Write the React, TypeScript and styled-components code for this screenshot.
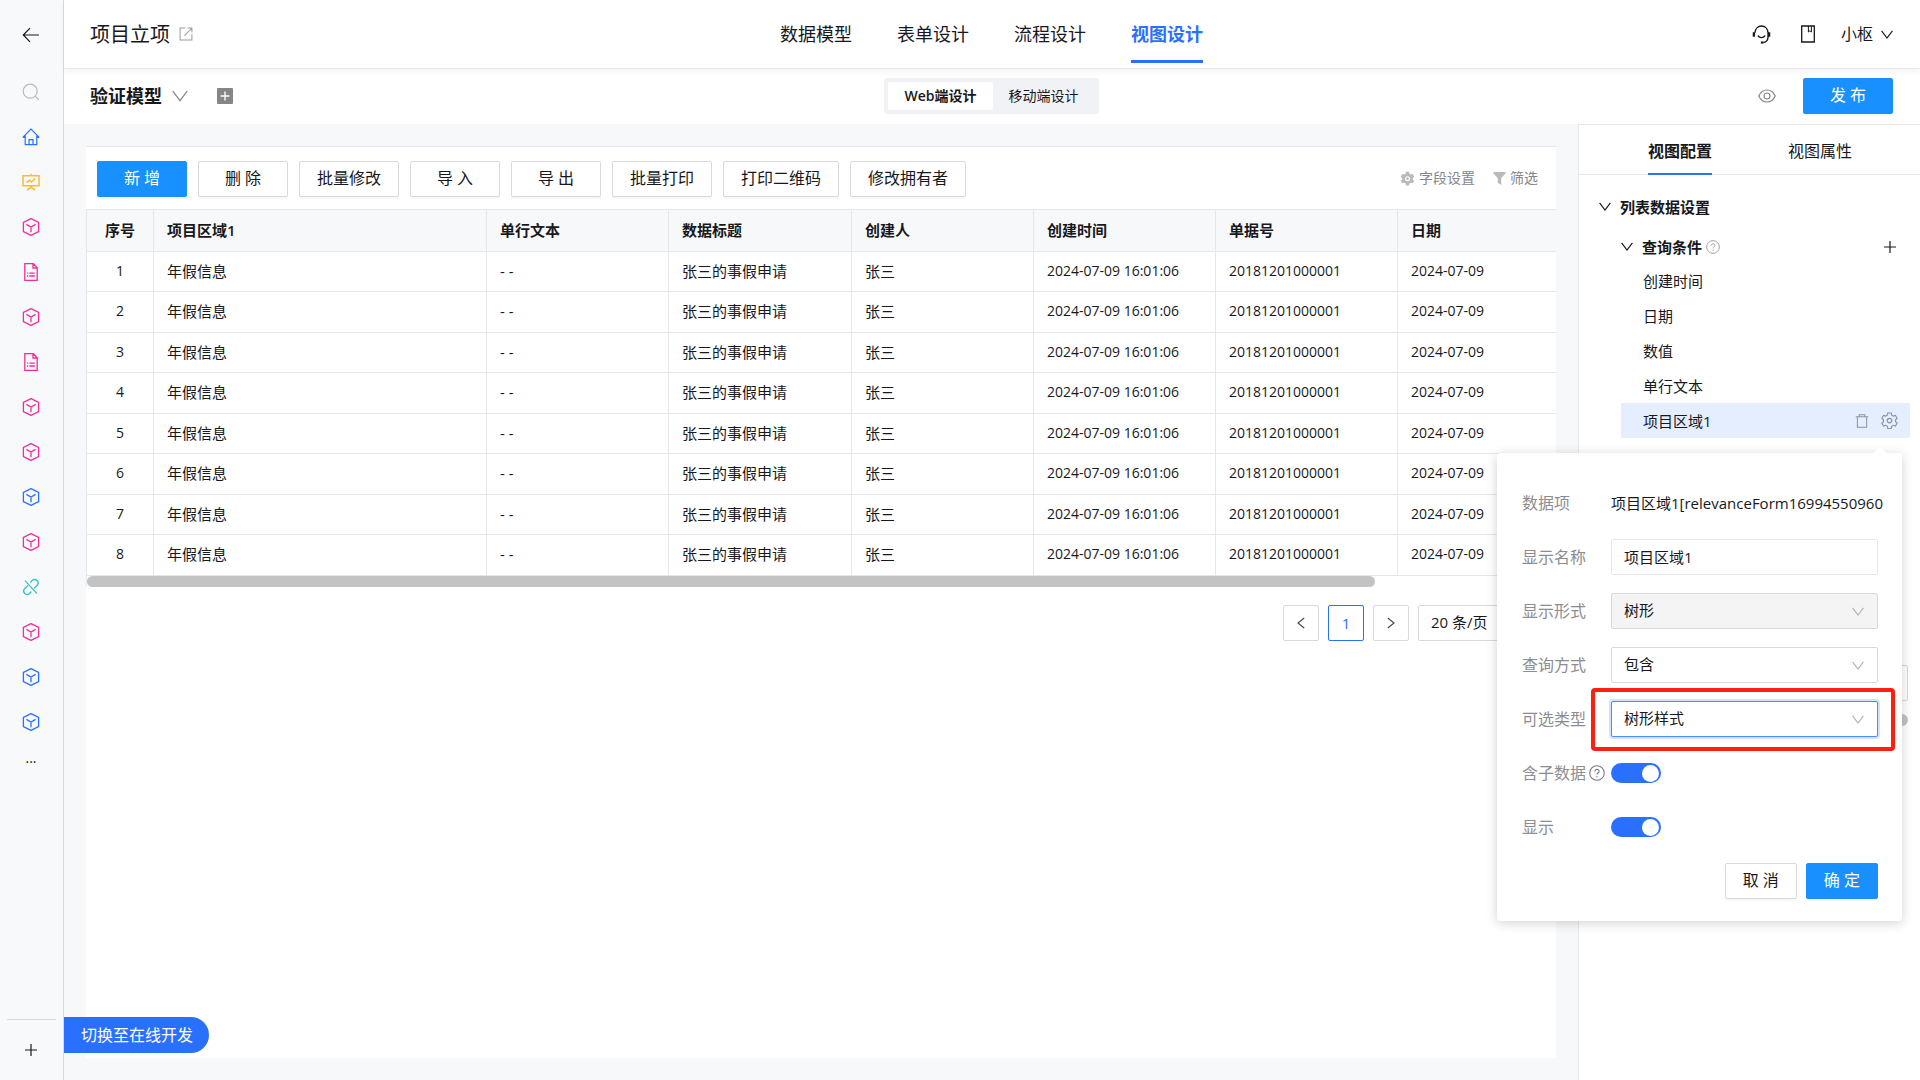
import React from "react";
import styled, { createGlobalStyle, css } from "styled-components";

const blue = "#2970ff";
const primary = "#1890ff";
const ink = "#17181c";
const line = "#e6e7ea";
const control = "#d9d9d9";
const canvas = "#f6f8fa";

const GlobalStyle = createGlobalStyle`
  *, *::before, *::after { box-sizing: border-box; }
  body {
    margin: 0;
    background: ${canvas};
    color: ${ink};
    font: 15px/24px "Open Sans", "Noto Sans CJK SC", sans-serif;
  }
  button, input, select { font: inherit; color: inherit; margin: 0; }
  button { padding: 0; border: 0; background: none; cursor: pointer; }
  a { color: inherit; text-decoration: none; }
  svg { display: block; flex: none; }
`;

/* ---------- icons ---------- */

type IconProps = { size?: number; color?: string };

const Svg = ({
  size = 16,
  color = "currentColor",
  weight = 1.2,
  children,
}: IconProps & { weight?: number; children: React.ReactNode }) => (
  <svg
    width={size}
    height={size}
    viewBox="0 0 18 18"
    fill="none"
    stroke={color}
    strokeWidth={weight}
    aria-hidden="true"
  >
    {children}
  </svg>
);

const BackIcon = () => (
  <Svg size={18}>
    <path d="M17 9H1.5M8 2.2 1.3 9 8 15.8" />
  </Svg>
);
const SearchIcon = () => (
  <Svg size={18} color="#b9bbbf">
    <circle cx="8.2" cy="8.2" r="7" />
    <path d="m13.2 13.2 3.6 3.6" />
  </Svg>
);
const HomeIcon = () => (
  <Svg size={18} color={blue}>
    <path d="M.8 9.4 9 1.2l8.2 8.2M3.2 7.6v9h11.6v-9M.8 9.4h2.4M14.8 9.4h2.4M7 16.6v-5h4v5" />
  </Svg>
);
const BoardIcon = () => (
  <Svg size={18} color="#ffb938" weight={1.5}>
    <path d="M1 2.8h16v10H1zM9 .8v2M4.600 9.600l2.800-2.400 2 1.800 3.800-3.400M9 12.800v2M5 17l4-2.600 4 2.600" />
  </Svg>
);
const CubeIcon = ({ color }: IconProps) => (
  <Svg size={18} color={color} weight={1.3}>
    <path d="M9 .6 16.600 4.500v9L9 17.400 1.400 13.500v-9zM4.400 6.400 9 9l4.600-2.600M9 9v5.200" />
  </Svg>
);
const DocIcon = ({ color }: IconProps) => (
  <Svg size={18} color={color} weight={1.3}>
    <path d="M2.800.7h8.600l3.800 4v12.600H2.800zM11 1v4h4M5 10.200h1.200M7.400 10.200h5.400M5 13h1.200M7.400 13h5.400" />
  </Svg>
);
const LinkIcon = () => (
  <Svg size={18} color="#3fc1c4" weight={1.4}>
    <path d="m8.400 4.400 1.800-1.800a3.400 3.400 0 0 1 4.800 0 3.400 3.400 0 0 1 0 4.800L12 10.400M9.400 13.600l-1.800 1.800a3.400 3.400 0 0 1-4.800 0 3.400 3.400 0 0 1 0-4.800L6 7.600M3 2.600l12 13" />
  </Svg>
);
const PlusIcon = ({ size = 12 }: IconProps) => (
  <Svg size={size} weight={1.8}>
    <path d="M9 0v18M0 9h18" />
  </Svg>
);
const ExternalIcon = () => (
  <Svg size={14} color="#9b9ca0" weight={1.3}>
    <path d="M8 1.400H1.400v15.200h15.200V9M11 1.400h5.600V7M16.400 1.600 7 11" />
  </Svg>
);
const Chevron = ({
  width = 12,
  color = "currentColor",
}: {
  width?: number;
  color?: string;
}) => (
  <svg
    width={width}
    height={(width * 3) / 4}
    viewBox="0 0 12 9"
    fill="none"
    stroke={color}
    strokeWidth={14 / width}
    aria-hidden="true"
  >
    <path d="M.6.800 6 8 11.400.8" />
  </svg>
);
const AddSquareIcon = () => (
  <svg width="16" height="16" viewBox="0 0 16 16" aria-hidden="true">
    <rect width="16" height="16" rx="1" fill="#85868a" />
    <path d="M8 3.500v9M3.500 8h9" stroke="#fff" strokeWidth="1.400" />
  </svg>
);
const HeadsetIcon = () => (
  <Svg size={19} weight={1.3}>
    <path d="M2.800 7.400C3 3.600 5.600 1 9 1s6 2.600 6.200 6.400v4.200c-.2 3-1.800 4.600-4.400 5M5.800 9.800c.8 2.800 5.600 2.800 6.400 0" />
    <path d="M1.800 6.800v4.400M16.200 6.800v4.400" strokeWidth="2.200" />
    <path d="M8.400 16.600h2.400" strokeWidth="2" />
  </Svg>
);
const BookIcon = () => (
  <svg width="14" height="18" viewBox="0 0 14 18" fill="none" stroke="currentColor" strokeWidth="1.300" aria-hidden="true">
    <path d="M.7 1h12.600v16H.7z" />
    <path d="M7.400 1v6l1.500-1.300L10.400 7V1" strokeWidth="1" />
  </svg>
);
const EyeIcon = () => (
  <Svg size={18} color="#85868a">
    <path d="M.8 9C2.600 5 5.400 3 9 3s6.400 2 8.200 6c-1.800 4-4.600 6-8.200 6S2.600 13 .8 9z" />
    <circle cx="9" cy="9" r="3" />
  </Svg>
);
const gearPath =
  "M7.200 1h3.600l.5 2.300 1.700 1 2.300-.7 1.800 3.100-1.700 1.600v1.900l1.700 1.500-1.800 3.100-2.300-.7-1.700 1-.5 2.400H7.200l-.5-2.400-1.700-1-2.300.7-1.800-3.100 1.700-1.500V8.300L.9 6.700l1.800-3.100 2.300.7 1.700-1z";
const GearIcon = () => (
  <Svg size={17} color="#8b93a3">
    <path d={gearPath} />
    <circle cx="9" cy="9.100" r="2.400" />
  </Svg>
);
const GearSolidIcon = () => (
  <svg width="15" height="15" viewBox="0 0 18 18" aria-hidden="true">
    <path d={gearPath} fill="#b9babd" />
    <circle cx="9" cy="9.200" r="3" fill="#fff" />
    <circle cx="9" cy="9.200" r="1.600" fill="#b9babd" />
  </svg>
);
const FilterIcon = () => (
  <svg width="13" height="13" viewBox="0 0 13 13" aria-hidden="true">
    <path d="M.5 0h12v1.500L8.200 6v7L4.800 10.800V6L.5 1.500z" fill="#b9babd" />
  </svg>
);
const TrashIcon = () => (
  <Svg size={14} color="#8b93a3" weight={1.3}>
    <path d="M1 3.600h16M5.400 3.400V1h7.200v2.400M3 3.600V17h12V3.600" />
  </Svg>
);
const HelpIcon = ({ size = 14, color = "#9b9ca0" }: IconProps) => (
  <Svg size={size} color={color}>
    <circle cx="9" cy="9" r="8.200" />
    <path d="M6.600 7.200c0-3 4.800-3 4.800 0 0 1.600-2.400 1.600-2.400 3.600M9 12.400v1.400" />
  </Svg>
);
const PageArrow = ({ next }: { next?: boolean }) => (
  <svg width="8" height="12" viewBox="0 0 8 12" fill="none" stroke="#4b4c50" strokeWidth="1.200" aria-hidden="true">
    <path d={next ? "M.8 1 7 6 .8 11" : "M7.200 1 1 6l6.200 5"} />
  </svg>
);

/* ---------- shell ---------- */

const Shell = styled.div`
  display: flex;
  min-height: 100vh;
`;

const Sidebar = styled.nav`
  flex: none;
  width: 64px;
  display: flex;
  flex-direction: column;
  align-items: center;
  padding: 12px 1px 0 0;
  border-right: 1px solid ${control};
  background: #f7f9fb;
`;

const RailButton = styled.button<{ $gap?: number }>`
  display: grid;
  place-items: center;
  width: 45px;
  height: 45px;
  margin-top: ${(p) => p.$gap ?? 0}px;
`;

const More = styled.button`
  height: 24px;
  margin-top: 2px;
  font-size: 14px;
`;

const RailFooter = styled.div`
  margin-top: auto;
  width: 49px;
  height: 61px;
  display: grid;
  place-items: center;
  border-top: 1px solid ${control};
`;

const Page = styled.div`
  flex: 1;
  min-width: 0;
  display: flex;
  flex-direction: column;
`;

const barGrid = css`
  display: grid;
  grid-template-columns: 1fr auto 1fr;
  align-items: center;
  background: #fff;
`;

const Header = styled.header`
  ${barGrid}
  position: relative;
  height: 69px;
  padding: 0 27px 0 26px;
  border-bottom: 1px solid ${line};
  box-shadow: 0 3px 6px rgba(0, 0, 0, 0.04);
`;

const SubHeader = styled.div`
  ${barGrid}
  height: 55px;
  padding: 0 27px 2px 26px;
`;

const Side = styled.div<{ $end?: boolean; $gap: number }>`
  display: flex;
  align-items: center;
  justify-content: ${(p) => (p.$end ? "flex-end" : "flex-start")};
  gap: ${(p) => p.$gap}px;
`;

const Title = styled.h1`
  margin: 0;
  padding-top: 2px;
  font-size: 20px;
  font-weight: 400;
`;

const MainTabs = styled.nav`
  display: flex;
  gap: 45px;
  align-self: start;
`;

const MainTab = styled.a<{ $active?: boolean }>`
  padding: 22px 0 14px;
  border-bottom: 3px solid ${(p) => (p.$active ? blue : "transparent")};
  color: ${(p) => (p.$active ? blue : ink)};
  font-size: 18px;
  font-weight: ${(p) => (p.$active ? 700 : 400)};
`;

const UserButton = styled.button`
  display: flex;
  align-items: center;
  gap: 8px;
  font-size: 16px;
`;

const ModelName = styled.button`
  display: flex;
  align-items: center;
  gap: 10px;
  margin-right: 29px;
  font-size: 18px;
  font-weight: 700;
`;

const Segmented = styled.div`
  display: flex;
  height: 36px;
  padding: 4px;
  border-radius: 3px;
  background: #f0f2f6;
`;

const Segment = styled.button<{ $active?: boolean }>`
  padding: 0 16px;
  border-radius: 2px;
  background: ${(p) => (p.$active ? "#fff" : "transparent")};
  font-size: 14px;
  font-weight: ${(p) => (p.$active ? 600 : 400)};
`;

const Button = styled.button<{ $primary?: boolean; $min?: number }>`
  height: 36px;
  min-width: ${(p) => p.$min ?? 0}px;
  padding: 0 17px 2px;
  border: 1px solid ${(p) => (p.$primary ? primary : control)};
  border-radius: 2px;
  background: ${(p) => (p.$primary ? primary : "#fff")};
  color: ${(p) => (p.$primary ? "#fff" : ink)};
  box-shadow: 0 2px 1px rgba(0, 0, 0, 0.03);
  font-size: 16px;
  white-space: nowrap;
`;

const Body = styled.div`
  flex: 1;
  display: flex;
  min-height: 0;
`;

/* ---------- list preview ---------- */

const Main = styled.main`
  flex: 1;
  min-width: 0;
  display: flex;
  padding: 22px;
`;

const Card = styled.section`
  flex: 1;
  min-width: 0;
  border-top: 1px solid ${line};
  background: #fff;
`;

const Toolbar = styled.div`
  display: flex;
  align-items: center;
  gap: 11px;
  padding: 14px 18px 12px 11px;
`;

const ToolLinks = styled.div`
  display: flex;
  gap: 18px;
  margin-left: auto;
  padding-bottom: 2px;
`;

const ToolLink = styled.button`
  display: flex;
  align-items: center;
  gap: 4px;
  color: #85868a;
  font-size: 14px;
`;

const TableScroll = styled.div`
  overflow: hidden;
  border-left: 1px solid ${line};
`;

const Table = styled.table`
  width: 1676px;
  table-layout: fixed;
  border-collapse: separate;
  border-spacing: 0;
  border-top: 1px solid ${line};
  tbody tr:nth-child(odd) { height: 40px; }
  tbody tr:nth-child(even) { height: 41px; }
`;

const cell = css`
  padding: 0 13px 2px;
  border-right: 1px solid ${line};
  border-bottom: 1px solid ${line};
  text-align: left;
  white-space: nowrap;
  &:first-child { text-align: center; }
`;

const Th = styled.th`
  ${cell}
  height: 42px;
  background: #f7f8fa;
  font-weight: 600;
`;

const Td = styled.td<{ $numeric?: boolean }>`
  ${cell}
  font-size: ${(p) => (p.$numeric ? 14 : 15)}px;
`;

const ScrollThumb = styled.div`
  width: 87.7%;
  height: 11px;
  border-radius: 6px;
  background: #c2c3c5;
`;

const Pagination = styled.div`
  display: flex;
  justify-content: flex-end;
  gap: 9px;
  padding: 18px 18px 0 0;
`;

const PageButton = styled.button<{ $active?: boolean }>`
  display: grid;
  place-items: center;
  width: 36px;
  height: 36px;
  border: 1px solid ${(p) => (p.$active ? blue : control)};
  border-radius: 2px;
  color: ${(p) => (p.$active ? blue : ink)};
`;

/* ---------- form controls ---------- */

const Control = styled.div<{ $width?: number }>`
  display: grid;
  align-items: center;
  position: relative;
  width: ${(p) => (p.$width ? `${p.$width}px` : "auto")};
  > * { grid-area: 1 / 1; }
  > svg { justify-self: end; margin-right: 14px; pointer-events: none; }
`;

const field = css`
  width: 100%;
  height: 36px;
  padding: 0 12px 2px;
  border: 1px solid ${control};
  border-radius: 2px;
  background: #fff;
  font-size: 15px;
  opacity: 1;
  outline: 0;
`;

const TextInput = styled.input`
  ${field}
  border-color: ${line};
`;

const NativeSelect = styled.select<{ $focused?: boolean }>`
  ${field}
  appearance: none;
  &:disabled { background: #f4f4f4; color: ${ink}; }
  ${(p) =>
    p.$focused &&
    css`
      border-color: #4c8bff;
      box-shadow: 0 0 0 2px rgba(41, 112, 255, 0.2);
    `}
`;

const Highlight = styled.div`
  position: absolute;
  inset: -13px -17px -14px -20px;
  border: 4px solid #ff1f10;
  border-radius: 4px;
  pointer-events: none;
`;

const Switch = styled.input`
  appearance: none;
  display: flex;
  align-items: center;
  justify-content: flex-end;
  width: 50px;
  height: 20px;
  padding: 0 2px;
  border-radius: 10px;
  background: ${blue};
  cursor: pointer;
  &::before {
    content: "";
    width: 17px;
    height: 17px;
    border-radius: 50%;
    background: #fff;
  }
`;

/* ---------- config panel ---------- */

const Panel = styled.aside`
  flex: none;
  width: 342px;
  border: solid ${line};
  border-width: 1px 0 0 1px;
  background: #fff;
`;

const PanelTabs = styled.div`
  display: flex;
  gap: 76px;
  padding-left: 69px;
  height: 50px;
  border-bottom: 1px solid ${line};
`;

const PanelTab = styled.button<{ $active?: boolean }>`
  height: 50px;
  padding-top: 4px;
  border-bottom: 2px solid ${(p) => (p.$active ? blue : "transparent")};
  font-size: 16px;
  font-weight: ${(p) => (p.$active ? 600 : 400)};
`;

const Tree = styled.div`
  padding: 13px 10px 0 20px;
`;

const Group = styled.div<{ $nested?: boolean }>`
  display: flex;
  align-items: center;
  height: ${(p) => (p.$nested ? 33 : 37)}px;
  padding: ${(p) => (p.$nested ? "0 14px 0 22px" : "0")};
  margin-bottom: ${(p) => (p.$nested ? 0 : 5)}px;
`;

const GroupToggle = styled.button`
  display: flex;
  align-items: center;
  gap: 9px;
  font-size: 15px;
  font-weight: 600;
`;

const GroupHelp = styled.span`
  margin: 0 auto 0 4px;
`;

const Conditions = styled.ul`
  margin: 0 0 0 22px;
  padding: 0;
  list-style: none;
`;

const Condition = styled.li<{ $selected?: boolean }>`
  position: relative;
  display: flex;
  align-items: center;
  gap: 12px;
  height: 35px;
  padding: 0 12px 0 22px;
  background: ${(p) => (p.$selected ? "#e5eeff" : "transparent")};
`;

const ConditionName = styled.span`
  flex: 1;
`;

const Extras = styled.div`
  display: grid;
  justify-items: end;
  gap: 13px;
  padding: 227px 12px 0 0;
`;

const ExtraInput = styled.input`
  ${field}
  width: 290px;
`;

const ExtraTrack = styled.div`
  width: 290px;
  height: 12px;
  border-radius: 6px;
  background: #c2c3c5;
`;

const Popover = styled.form`
  position: absolute;
  z-index: 2;
  top: 50px;
  right: 8px;
  display: grid;
  grid-template-columns: 89px 267px;
  grid-auto-rows: 36px;
  align-items: center;
  row-gap: 18px;
  padding: 32px 24px 22px 25px;
  border-radius: 4px;
  background: #fff;
  box-shadow: 0 2px 12px rgba(0, 0, 0, 0.18);
  &::before {
    content: "";
    position: absolute;
    top: -6px;
    right: 15px;
    width: 14px;
    height: 6px;
    background: #fff;
    clip-path: polygon(50% 0, 100% 100%, 0 100%);
  }
`;

const Label = styled.label`
  display: flex;
  align-items: center;
  gap: 3px;
  color: #8c8d91;
  font-size: 16px;
  white-space: nowrap;
`;

const ItemValue = styled.output`
  font-size: 15px;
  white-space: nowrap;
`;

const Actions = styled.div`
  grid-column: 1 / -1;
  display: flex;
  justify-content: flex-end;
  gap: 9px;
`;

const ModeSwitch = styled.button`
  position: fixed;
  left: 64px;
  bottom: 27px;
  height: 36px;
  padding: 0 16px 0 17px;
  border-radius: 0 18px 18px 0;
  background: ${blue};
  color: #fff;
  font-size: 16px;
`;

/* ---------- data ---------- */

const pink = "#f22e96";

const rail: { name: string; icon: React.ReactNode }[] = [
  { name: "首页", icon: <HomeIcon /> },
  { name: "看板", icon: <BoardIcon /> },
  { name: "模型一", icon: <CubeIcon color={pink} /> },
  { name: "文档一", icon: <DocIcon color={pink} /> },
  { name: "模型二", icon: <CubeIcon color={pink} /> },
  { name: "文档二", icon: <DocIcon color={pink} /> },
  { name: "模型三", icon: <CubeIcon color={pink} /> },
  { name: "模型四", icon: <CubeIcon color={pink} /> },
  { name: "模型五", icon: <CubeIcon color={blue} /> },
  { name: "模型六", icon: <CubeIcon color={pink} /> },
  { name: "链接", icon: <LinkIcon /> },
  { name: "模型七", icon: <CubeIcon color={pink} /> },
  { name: "模型八", icon: <CubeIcon color={blue} /> },
  { name: "模型九", icon: <CubeIcon color={blue} /> },
];

const mainTabs = ["数据模型", "表单设计", "流程设计", "视图设计"];
const tools = ["新 增", "删 除", "批量修改", "导 入", "导 出", "批量打印", "打印二维码", "修改拥有者"];

const columns = [
  { title: "序号", width: 67 },
  { title: "项目区域1", width: 333 },
  { title: "单行文本", width: 182 },
  { title: "数据标题", width: 183 },
  { title: "创建人", width: 182 },
  { title: "创建时间", width: 182 },
  { title: "单据号", width: 182 },
  { title: "日期" },
];

const record = ["年假信息", "- -", "张三的事假申请", "张三", "2024-07-09 16:01:06", "20181201000001", "2024-07-09"];
const rows = Array.from({ length: 8 }, (_, i) => [String(i + 1), ...record]);
const conditions = ["创建时间", "日期", "数值", "单行文本", "项目区域1"];

/* ---------- parts ---------- */

type SelectProps = {
  id?: string;
  label?: string;
  value: string;
  width?: number;
  disabled?: boolean;
  focused?: boolean;
};

const Select = ({ id, label, value, width, disabled, focused }: SelectProps) => (
  <Control $width={width}>
    <NativeSelect id={id} aria-label={label} disabled={disabled} $focused={focused}>
      <option>{value}</option>
    </NativeSelect>
    <Chevron width={12} color="#b4b4b4" />
    {focused && <Highlight />}
  </Control>
);

const ConditionPopover = () => (
  <Popover onSubmit={(e) => e.preventDefault()}>
    <Label htmlFor="item">数据项</Label>
    <ItemValue id="item">项目区域1[relevanceForm16994550960</ItemValue>
    <Label htmlFor="name">显示名称</Label>
    <TextInput id="name" defaultValue="项目区域1" />
    <Label htmlFor="form">显示形式</Label>
    <Select id="form" value="树形" disabled />
    <Label htmlFor="query">查询方式</Label>
    <Select id="query" value="包含" />
    <Label htmlFor="kind">可选类型</Label>
    <Select id="kind" value="树形样式" focused />
    <Label htmlFor="children">
      含子数据
      <HelpIcon size={16} color="#77787c" />
    </Label>
    <Switch id="children" type="checkbox" defaultChecked />
    <Label htmlFor="visible">显示</Label>
    <Switch id="visible" type="checkbox" defaultChecked />
    <Actions>
      <Button type="button" $min={72}>取 消</Button>
      <Button type="submit" $primary $min={72}>确 定</Button>
    </Actions>
  </Popover>
);

export default function App() {
  return (
    <Shell>
      <GlobalStyle />
      <Sidebar>
        <RailButton aria-label="返回"><BackIcon /></RailButton>
        <RailButton aria-label="搜索" $gap={12}><SearchIcon /></RailButton>
        {rail.map((item) => (
          <RailButton key={item.name} aria-label={item.name}>{item.icon}</RailButton>
        ))}
        <More>...</More>
        <RailFooter>
          <RailButton aria-label="添加"><PlusIcon /></RailButton>
        </RailFooter>
      </Sidebar>

      <Page>
        <Header>
          <Side $gap={9}>
            <Title>项目立项</Title>
            <ExternalIcon />
          </Side>
          <MainTabs>
            {mainTabs.map((tab) => (
              <MainTab key={tab} href="#" $active={tab === "视图设计"}>{tab}</MainTab>
            ))}
          </MainTabs>
          <Side $end $gap={26}>
            <Side $gap={30}>
              <button aria-label="客服"><HeadsetIcon /></button>
              <button aria-label="手册"><BookIcon /></button>
            </Side>
            <UserButton>小枢<Chevron width={12} /></UserButton>
          </Side>
        </Header>

        <SubHeader>
          <Side $gap={0}>
            <ModelName>验证模型<Chevron width={16} color="#85868a" /></ModelName>
            <button aria-label="新建模型"><AddSquareIcon /></button>
          </Side>
          <Segmented>
            <Segment $active>Web端设计</Segment>
            <Segment>移动端设计</Segment>
          </Segmented>
          <Side $end $gap={27}>
            <button aria-label="预览"><EyeIcon /></button>
            <Button $primary $min={90}>发 布</Button>
          </Side>
        </SubHeader>

        <Body>
          <Main>
            <Card>
              <Toolbar>
                {tools.map((tool, i) => (
                  <Button key={tool} $primary={i === 0} $min={90}>{tool}</Button>
                ))}
                <ToolLinks>
                  <ToolLink><GearSolidIcon />字段设置</ToolLink>
                  <ToolLink><FilterIcon />筛选</ToolLink>
                </ToolLinks>
              </Toolbar>
              <TableScroll>
                <Table>
                  <colgroup>
                    {columns.map((c) => <col key={c.title} width={c.width} />)}
                  </colgroup>
                  <thead>
                    <tr>{columns.map((c) => <Th key={c.title}>{c.title}</Th>)}</tr>
                  </thead>
                  <tbody>
                    {rows.map((row) => (
                      <tr key={row[0]}>
                        {row.map((value, i) => (
                          <Td key={i} $numeric={i === 0 || i > 4}>{value}</Td>
                        ))}
                      </tr>
                    ))}
                  </tbody>
                </Table>
                <ScrollThumb />
              </TableScroll>
              <Pagination>
                <PageButton aria-label="上一页"><PageArrow /></PageButton>
                <PageButton $active>1</PageButton>
                <PageButton aria-label="下一页"><PageArrow next /></PageButton>
                <Select label="每页条数" value="20 条/页" width={120} />
              </Pagination>
            </Card>
          </Main>

          <Panel>
            <PanelTabs>
              <PanelTab $active>视图配置</PanelTab>
              <PanelTab>视图属性</PanelTab>
            </PanelTabs>
            <Tree>
              <Group>
                <GroupToggle><Chevron width={12} />列表数据设置</GroupToggle>
              </Group>
              <Group $nested>
                <GroupToggle><Chevron width={12} />查询条件</GroupToggle>
                <GroupHelp><HelpIcon /></GroupHelp>
                <button aria-label="添加条件"><PlusIcon /></button>
              </Group>
              <Conditions>
                {conditions.map((name) => {
                  const selected = name === "项目区域1";
                  return (
                    <Condition key={name} $selected={selected}>
                      <ConditionName>{name}</ConditionName>
                      {selected && (
                        <>
                          <button aria-label="删除条件"><TrashIcon /></button>
                          <button aria-label="设置条件"><GearIcon /></button>
                          <ConditionPopover />
                        </>
                      )}
                    </Condition>
                  );
                })}
              </Conditions>
            </Tree>
            <Extras>
              <ExtraInput aria-label="条件值" />
              <ExtraTrack />
            </Extras>
          </Panel>
        </Body>
      </Page>
      <ModeSwitch>切换至在线开发</ModeSwitch>
    </Shell>
  );
}
